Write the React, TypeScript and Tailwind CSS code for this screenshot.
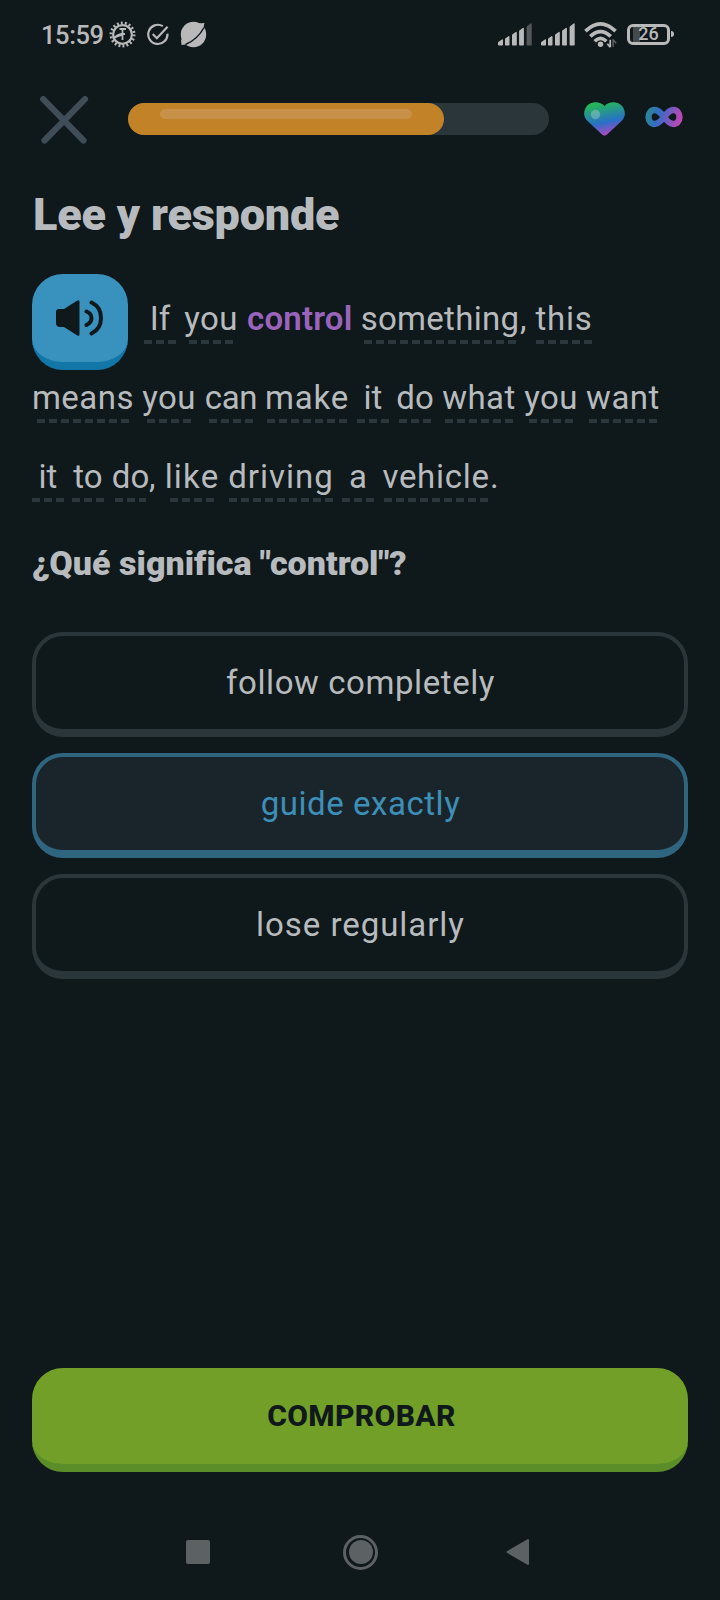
import React from "react";

type WordProps = { text: string; slot: string; tracking?: string };

function Word({ text, slot, tracking = "" }: WordProps) {
  return (
    <span className={`flex h-[48px] flex-none flex-col items-center ${slot}`}>
      <span className={`h-[44px] leading-[46px] whitespace-nowrap ${tracking}`}>{text}</span>
      <span className="h-1 w-full bg-[repeating-linear-gradient(90deg,#2b373d_0px,#2b373d_8px,transparent_8px,transparent_12px)]" />
    </span>
  );
}

function Option({ text, tracking, selected = false }: { text: string; tracking: string; selected?: boolean }) {
  const tone = selected
    ? "border-[#2f657f] bg-[#1a252b] text-[#3e8fb8]"
    : "border-[#2b363b] text-[#b7bbbd]";
  return (
    <button
      className={`flex h-[105px] w-full items-center justify-center rounded-[31px] border-4 border-b-8 pt-[1px] pl-[1px] text-[33px] ${tracking} ${tone}`}
    >
      {text}
    </button>
  );
}

function Signal({ dimLast = false }: { dimLast?: boolean }) {
  return (
    <svg width="35" height="24" viewBox="0 0 35 24" fill="#b9b9b9" stroke="#b9b9b9" strokeWidth="1.400" strokeLinejoin="round">
      <path d="M.700 19.500l3.600-2.500v4.800H.700z" />
      <path d="M7.700 16l3.100-2.200v8H7.700z" />
      <path d="M14.700 12l3.400-2.400v12.200h-3.400z" />
      <path d="M21.800 8l3.400-2.400v16.200h-3.400z" />
      <path d="M29.300 4l3.700-3v20.800h-3.700z" opacity={dimLast ? 0.4 : 1} />
    </svg>
  );
}

export default function App() {
  return (
    <div className="flex h-[1600px] w-[720px] flex-col overflow-hidden bg-[#0f181b] font-[Roboto,'Liberation_Sans',sans-serif] text-[#b7bbbd]">
      <div className="flex h-[70px] flex-none items-center pl-[41px] text-[#b9b9b9]">
        <span className="w-[63px] text-[25.5px] font-medium leading-[30px] tracking-[-0.4px] whitespace-nowrap">15:59</span>
        <svg className="mb-[2px] ml-[5px]" width="27" height="27" viewBox="0 0 27 27" fill="none" stroke="#b9b9b9">
          <circle cx="13.500" cy="13.500" r="9.400" strokeWidth="2.200" />
          <circle cx="13.500" cy="13.500" r="11.600" strokeWidth="2.800" strokeDasharray="1.900 2.149" />
          <path d="M10.500 8h6.500M13.500 8v11M13 13h3" strokeWidth="1.800" />
          <path d="M3.500 17.500q3-4.500 10.500-6v3.500q-5 0-9.500 3.500z" fill="#b9b9b9" stroke="none" />
        </svg>
        <svg className="mb-[1px] ml-[10px]" width="24" height="24" viewBox="0 0 25 25" fill="none" stroke="#b9b9b9" strokeWidth="2.300">
          <path d="M17.500 3.300A10 10 0 1 0 22.300 11" />
          <path d="M7 11.500l4.300 4.300L22.500 4" />
        </svg>
        <svg className="mb-[2px] ml-[10px]" width="27" height="27" viewBox="0 0 27 27" fill="#b9b9b9">
          <circle cx="13.500" cy="13.500" r="12.700" />
          <path d="M18 2.500l6.500-.500-1.500 6zM1 18L1.500 24l6-.800z" />
          <path d="M24 6.500C20 14 14 20 5.500 23.500" fill="none" stroke="#0f181b" strokeWidth="1.500" />
        </svg>
        <div className="ml-[291px] flex items-center">
          <Signal dimLast />
          <div className="ml-2"><Signal /></div>
          <svg className="ml-[8px]" width="34" height="28" viewBox="0 0 35 28" fill="none" stroke="#b9b9b9" strokeWidth="3.800">
            <path d="M1.500 10Q17 -5 32.500 10M6.500 15.500Q17 5.500 27.500 15.500M11 20.500Q17 14.500 23 20.500" />
            <circle cx="17" cy="23.500" r="2.800" fill="#b9b9b9" stroke="none" />
            <path d="M27 19v7.500M24 23l3 3.500" strokeWidth="1.800" />
            <path d="M30 26v-7.500M30 19l3 3.500" strokeWidth="1.600" opacity="0.450" />
          </svg>
          <div className="mb-[2px] ml-[9px] flex items-center">
            <div className="flex h-[21px] w-[43px] items-center justify-center rounded-[6px] border-[3px] border-[#b9b9b9] bg-[linear-gradient(90deg,transparent_3px,#454a4c_3px,#454a4c_10px,transparent_10px)] text-[18px] font-medium leading-none">26</div>
            <div className="ml-[1px] h-[6px] w-[3px] rounded-r bg-[#b9b9b9]" />
          </div>
        </div>
      </div>

      <header className="flex h-[98px] flex-none items-center pl-[40px]">
        <svg className="mt-[2px]" width="49" height="48" viewBox="0 0 49 48" stroke="#3f4d56" strokeWidth="6.200" strokeLinecap="round">
          <path d="M3.200 3.200L43.500 44.500M45 3.200L4.500 44.500" />
        </svg>
        <div className="ml-[39px] h-8 w-[421px] rounded-full bg-[#2b363b]">
          <div className="h-8 w-[316px] rounded-full bg-[#c28228] pt-[6px] pl-8">
            <div className="h-[10px] w-[252px] rounded-full bg-[#c7914a]" />
          </div>
        </div>
        <svg className="mb-[1px] ml-[35px]" width="41" height="34" viewBox="0 0 41 34">
          <defs>
            <linearGradient id="heart" x1="0.350" y1="0" x2="0.600" y2="1">
              <stop offset="0.050" stopColor="#26b55a" />
              <stop offset="0.600" stopColor="#2870c8" />
              <stop offset="1" stopColor="#b846c0" />
            </linearGradient>
          </defs>
          <path d="M20.500 4C15-2 5-.500 1.500 6-1 11 0 16 4 19.500L18 32.500q2.500 2.300 5 0L37 19.500C41 16 42 11 39.500 6 36-.500 26-2 20.500 4z" fill="url(#heart)" />
          <circle cx="11.500" cy="12.500" r="4.700" fill="#fff" opacity="0.250" />
        </svg>
        <svg className="mb-[4px] ml-[20px]" width="38" height="22" viewBox="0 0 38 22" fill="none">
          <defs>
            <linearGradient id="loop" x1="0" y1="0" x2="38" y2="12" gradientUnits="userSpaceOnUse">
              <stop stopColor="#278e88" />
              <stop offset="0.400" stopColor="#366bc4" />
              <stop offset="1" stopColor="#c844b8" />
            </linearGradient>
          </defs>
          <path d="M19 11C15 5.500 12.500 4 9.500 4a6 7 0 0 0 0 14C12.500 18 15 16.500 19 11S25.500 4 28.500 4a6 7 0 0 1 0 14C25.500 18 23 16.500 19 11z" stroke="url(#loop)" strokeWidth="6.300" />
        </svg>
      </header>

      <main className="flex flex-none flex-col px-8 pt-[20px]">
        <h1 className="h-[54px] pl-[1px] text-[45px] font-black leading-[54px] tracking-[-0.200px] whitespace-nowrap">Lee y responde</h1>

        <div className="mt-[32px] flex h-[96px] text-[33px]">
          <button className="flex h-[96px] w-[96px] flex-none items-center justify-center rounded-[31px] border-b-8 border-[#1277a8] bg-[#3992bd]">
            <svg width="48" height="36" viewBox="0 0 48 36">
              <path d="M0 12q0-3 3-3h5L21 .800q2.500-1.500 2.500 1v32.400q0 2.500-2.500 1L8 27H4q-4 0-4-4z" fill="#0f181b" />
              <path d="M30.500 11.500q5 2 5 6.500t-5 7M35.500 2.500q9.500 4.500 9.500 15.500t-9.500 15.500" fill="none" stroke="#0f181b" strokeWidth="4" strokeLinecap="round" />
            </svg>
          </button>
          <div className="flex pt-[22px]">
            <Word text="If" slot="ml-[16px] w-8" />
            <Word text="you" slot="ml-[13px] w-[44px]" tracking="tracking-[0.3px]" />
            <span className="ml-[13px] w-[107px] pl-[1px] leading-[46px] font-semibold tracking-[0.200px] whitespace-nowrap text-[#9a64bd]">control</span>
            <Word text="something" slot="ml-[11px] w-[152px]" tracking="tracking-[0.3px]" />
            <span className="w-5 pl-[4px] leading-[46px]">,</span>
            <Word text="this" slot="w-[56px]" tracking="tracking-[0.7px]" />
          </div>
        </div>
        <div className="mt-[5px] flex h-[48px] text-[33px]">
          <Word text="means" slot="ml-[5px] w-[92px]" tracking="tracking-[0.5px]" />
          <Word text="you" slot="ml-[18px] w-[44px]" tracking="tracking-[0.3px]" />
          <Word text="can" slot="ml-[18px] w-[44px]" tracking="tracking-[-0.300px]" />
          <Word text="make" slot="ml-[14px] w-[80px]" tracking="tracking-[0.8px]" />
          <Word text="it" slot="ml-[10px] w-8" />
          <Word text="do" slot="ml-[10px] w-8" />
          <Word text="what" slot="ml-[14px] w-[68px]" tracking="tracking-[0.5px]" />
          <Word text="you" slot="ml-[16px] w-[44px]" tracking="tracking-[0.3px]" />
          <Word text="want" slot="ml-[16px] w-[68px]" tracking="tracking-[0.5px]" />
        </div>
        <div className="mt-[31px] flex h-[48px] text-[33px]">
          <Word text="it" slot="w-8" />
          <Word text="to" slot="ml-[8px] w-8" />
          <Word text="do" slot="ml-[11px] w-[31px]" />
          <span className="w-6 pl-[3px] leading-[46px]">,</span>
          <Word text="like" slot="w-[44px]" tracking="tracking-[1.2px]" />
          <Word text="driving" slot="ml-[15px] w-[104px]" tracking="tracking-[1px]" />
          <Word text="a" slot="ml-[9px] w-8" />
          <Word text="vehicle" slot="ml-[10px] w-[104px]" tracking="tracking-[0.7px]" />
          <span className="pl-[2px] leading-[46px]">.</span>
        </div>

        <h2 className="mt-[39px] h-[44px] text-[34px] font-black leading-[44px] tracking-[0.020px] whitespace-nowrap">¿Qué significa "control"?</h2>

        <div className="mt-[47px] flex flex-col gap-4">
          <Option text="follow completely" tracking="tracking-[0.58px]" />
          <Option text="guide exactly" tracking="tracking-[0.550px]" selected />
          <Option text="lose regularly" tracking="tracking-[0.950px]" />
        </div>
      </main>

      <footer className="mt-auto flex flex-none flex-col">
        <button className="mx-8 flex h-[104px] items-center justify-center rounded-[31px] border-b-8 border-[#5b8d28] bg-[#719f28] pb-[2px] pl-[3px] text-[30px] font-extrabold tracking-[0.400px] text-[#0f181b]">
          COMPROBAR
        </button>
        <nav className="flex h-[128px] items-center pt-[32px] pl-[186px]">
          <div className="h-6 w-6 rounded-[2px] bg-[#5c6163]" />
          <div className="ml-[133px] flex h-[35px] w-[35px] items-center justify-center rounded-full border-[3px] border-[#5c6163]">
            <div className="h-6 w-6 rounded-full bg-[#5c6163]" />
          </div>
          <svg className="ml-[128px]" width="24" height="28" viewBox="0 0 24 28">
            <path d="M1.500 14L22 2v24z" fill="#5c6163" stroke="#5c6163" strokeWidth="2" strokeLinejoin="round" />
          </svg>
        </nav>
      </footer>
    </div>
  );
}
